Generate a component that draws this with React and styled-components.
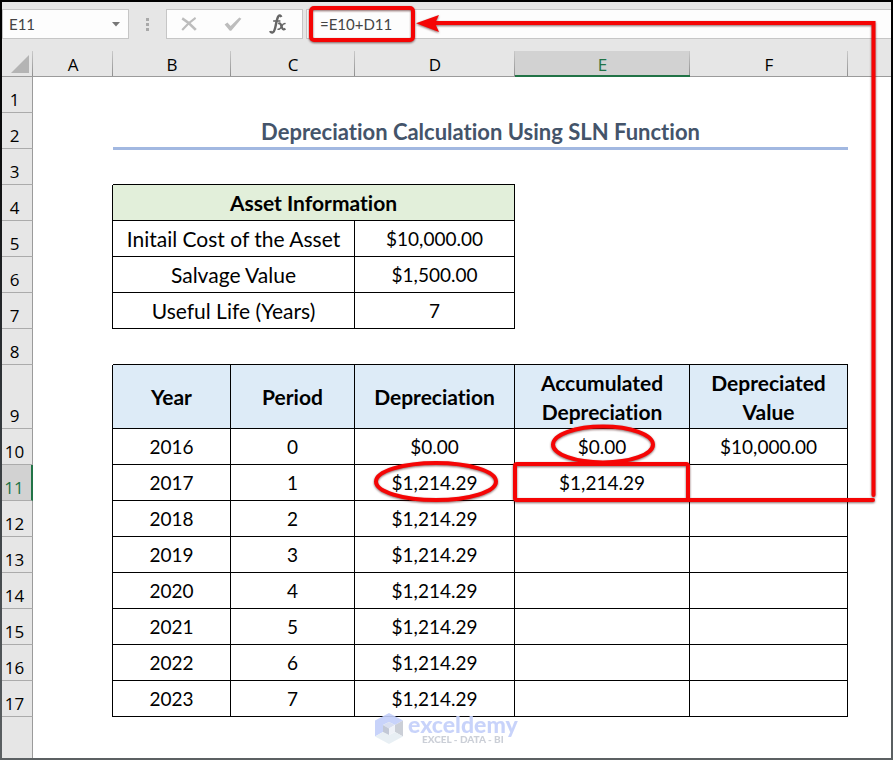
// Import Packages
import styled, { createGlobalStyle, css } from "styled-components";

const GlobalStyle = createGlobalStyle`
    * {
        box-sizing: border-box;
    }

    body {
        margin: 0;
        font-family: Lato, "Liberation Sans", sans-serif;
        font-variant-ligatures: none;
        color: #000;
    }
`;

// Sheet contents
const columns = ["A", "B", "C", "D", "E", "F"];

const assetRows = [
    { row: 5, label: "Initail Cost of the Asset", value: "$10,000.00" },
    { row: 6, label: "Salvage Value", value: "$1,500.00" },
    { row: 7, label: "Useful Life (Years)", value: "7" },
];

const yearRows = [
    { row: 10, cells: ["2016", "0", "$0.00", "$0.00", "$10,000.00"] },
    { row: 11, cells: ["2017", "1", "$1,214.29", "$1,214.29", ""] },
    { row: 12, cells: ["2018", "2", "$1,214.29", "", ""] },
    { row: 13, cells: ["2019", "3", "$1,214.29", "", ""] },
    { row: 14, cells: ["2020", "4", "$1,214.29", "", ""] },
    { row: 15, cells: ["2021", "5", "$1,214.29", "", ""] },
    { row: 16, cells: ["2022", "6", "$1,214.29", "", ""] },
    { row: 17, cells: ["2023", "7", "$1,214.29", "", ""] },
];

// Styled components
const StyledFrame = styled.main`
    position: relative;
    display: flex;
    flex-direction: column;
    min-height: 100vh;
    padding: 2px;
    background: linear-gradient(#000, #0c0d0e 20%, #33383c 55%, #5c6163);
`;

const StyledFormulaBar = styled.header`
    display: flex;
    align-items: center;
    height: 49px;
    padding: 7px 0 12px;
    background: #e6e6e6;
`;

const StyledBox = styled.div`
    display: flex;
    align-items: center;
    height: 30px;
    background: #fdfdfd;
    border: 1px solid #c6c6c6;
`;

const StyledNameBox = styled(StyledBox)`
    width: 127px;
`;

const StyledTools = styled(StyledBox)`
    width: 137px;
    margin-right: 3px;
    padding-right: 2px;
`;

const StyledFormulaBox = styled(StyledBox)`
    flex: 1;
    border-right: 0;
`;

const StyledInput = styled.input`
    flex: 1;
    min-width: 0;
    height: 100%;
    padding: 0 0 0 ${({ $indent }) => $indent}px;
    border: 0;
    outline: 0;
    background: transparent;
    font: 15px Lato, "Liberation Sans", sans-serif;
    color: #444;
`;

const StyledIconButton = styled.button`
    display: flex;
    flex: ${({ $narrow }) => ($narrow ? "0 0 24px" : 1)};
    align-items: center;
    justify-content: center;
    height: 100%;
    padding: 0;
    border: 0;
    background: transparent;
`;

const StyledDots = styled.div`
    display: flex;
    flex-direction: column;
    align-items: center;
    gap: 2px;
    width: 37px;

    i {
        width: 3px;
        height: 3px;
        background: #a9a9a9;
    }
`;

const StyledSheet = styled.div`
    display: flex;
    flex: 1;
    flex-direction: column;
    background: #fff;
`;

const StyledTable = styled.table`
    flex: 1;
    width: 100%;
    table-layout: fixed;
    border-collapse: separate;
    border-spacing: 0;
`;

const StyledCol = styled.col`
    width: ${({ $width }) => $width}px;
`;

const StyledRow = styled.tr`
    height: ${({ $tall }) => ($tall ? 64 : 36)}px;
`;

const headingText = css`
    font-family: "Open Sans", "Noto Sans", sans-serif;
    font-size: 17px;
    font-weight: 400;
    line-height: 20px;
`;

const StyledColumnHead = styled.th`
    ${headingText}
    height: 26px;
    padding: ${({ $active }) => ($active ? 3 : 2)}px 0 0;
    color: ${({ $active }) => ($active ? "#217346" : "#000")};
    background:
        linear-gradient(#c9c9c9, #8f8f8f) right / 1px 100% no-repeat,
        ${({ $active }) => ($active ? "#d2d2d2" : "#e6e6e6")};
    border-bottom: ${({ $active }) =>
        $active ? "2px solid #217346" : "1px solid #9b9b9b"};

    &:last-child {
        background: #e6e6e6;
    }
`;

const StyledCorner = styled(StyledColumnHead)`
    padding: 4px 3px 3px 9px;

    svg {
        display: block;
    }
`;

const StyledRowHead = styled.th`
    ${headingText}
    padding: 0 5px 2px 0;
    vertical-align: bottom;
    color: ${({ $active }) => ($active ? "#217346" : "#000")};
    background: ${({ $active }) => ($active ? "#d2d2d2" : "#e6e6e6")};
    border-right: ${({ $active }) =>
        $active ? "2px solid #217346" : "1px solid #9b9b9b"};
    border-bottom: ${({ $last }) => ($last ? 0 : "1px solid #ababab")};
`;

// A cell draws its own right and bottom line; $edge names the ones it has
const StyledCell = styled.td`
    padding: 0;
    font-size: 19px;
    line-height: 29px;
    text-align: center;
    border: 0 solid #000;
    border-right-width: ${({ $edge = "" }) => ($edge.includes("r") ? 1 : 0)}px;
    border-bottom-width: ${({ $edge = "" }) => ($edge.includes("b") ? 1 : 0)}px;
`;

// Words are set a little larger than the figures
const StyledLabelCell = styled(StyledCell)`
    font-size: 21px;
`;

const StyledHeadCell = styled(StyledLabelCell)`
    font-weight: 700;
    background: ${({ $green }) => ($green ? "#e2efda" : "#ddebf7")};
`;

const StyledTitleCell = styled(StyledCell)`
    padding-top: 3px;
    border-bottom: 2px solid #a2b8e1;
    box-shadow: 0 1px #a2b8e1;

    h1 {
        margin: 0;
        font-size: 22px;
        font-weight: 700;
        line-height: 29px;
        color: #44546a;
    }
`;

// The red marks lie over the sheet
const StyledMarks = styled.svg`
    position: absolute;
    top: 0;
    left: 0;
    pointer-events: none;
    filter: drop-shadow(0 1px 1px rgba(60, 0, 0, 0.6));
`;

const StyledWatermark = styled.div`
    position: absolute;
    top: 713px;
    left: 375px;
    display: flex;
    gap: 5px;
    opacity: 0.9;
`;

const StyledBrand = styled.div`
    display: flex;
    flex-direction: column;
    align-items: center;

    strong {
        font: 900 23px/22px Lato, sans-serif;
        color: #c3cffa;
    }

    small {
        font: 900 10px/8px Lato, sans-serif;
        color: #c6cad3;
    }
`;

function FormulaBar() {
    return (
        <StyledFormulaBar>
            <StyledNameBox>
                <StyledInput $indent={6} aria-label="Name box" defaultValue="E11" />
                <StyledIconButton $narrow aria-label="Open name list">
                    <svg width="8" height="5" viewBox="0 0 8 5">
                        <path d="M0 0h8L4 4.5z" fill="#777" />
                    </svg>
                </StyledIconButton>
            </StyledNameBox>
            <StyledDots>
                <i />
                <i />
                <i />
            </StyledDots>
            <StyledTools>
                <StyledIconButton aria-label="Cancel">
                    <svg width="16" height="14" viewBox="0 0 16 14" fill="none" stroke="#bdbdbd">
                        <path d="M1.2 1.4Q8 5.4 14.8 12.8" strokeWidth="2.6" />
                        <path d="M14.6 0.8Q7 6 1.2 13" strokeWidth="2" />
                    </svg>
                </StyledIconButton>
                <StyledIconButton aria-label="Enter">
                    <svg width="18" height="14" viewBox="0 0 18 14">
                        <path d="M0.6 7.6L3.4 5.6L6.6 9L15.3 0.4L17.4 1.8L7.2 13.8H5.8z" fill="#bdbdbd" />
                    </svg>
                </StyledIconButton>
                <StyledIconButton aria-label="Insert function">
                    <svg width="18" height="20" viewBox="0 0 18 20" fill="none" stroke="#666">
                        <path d="M12.4 3Q11 0.4 9.4 2.3Q8.2 4 6.6 12Q5.4 18.2 3.4 18.5Q1.6 18.8 1.2 17" strokeWidth="2.4" />
                        <path d="M4.2 7H11.4" strokeWidth="1.6" />
                        <path d="M9.3 9.8Q11 8.4 11.8 10.5L13.2 14.2Q14 16.3 16.4 14.6" strokeWidth="2.2" />
                        <path d="M16.6 9.6Q14.5 9 12.6 12.3Q10.6 16.2 8.6 15" strokeWidth="1.5" />
                    </svg>
                </StyledIconButton>
            </StyledTools>
            <StyledFormulaBox>
                <StyledInput $indent={13} aria-label="Formula bar" defaultValue="=E10+D11" />
            </StyledFormulaBox>
        </StyledFormulaBar>
    );
}

function Marks() {
    return (
        <StyledMarks width="893" height="760" fill="none" stroke="#f50505" strokeWidth="4" aria-hidden="true">
            <rect x="311" y="8" width="102" height="32" rx="3" />
            <rect x="515" y="464" width="173" height="36" rx="2" />
            <ellipse cx="603" cy="444.5" rx="50" ry="18" />
            <ellipse cx="436" cy="481.5" rx="60" ry="18.5" />
            <path d="M688 500H873" strokeLinecap="round" />
            <path d="M873.5 495V23H434" strokeLinecap="round" />
            <path d="M416 23.3L439 15L435 23.3L439 32z" fill="#f50505" stroke="none" />
        </StyledMarks>
    );
}

function Watermark() {
    return (
        <StyledWatermark>
            <svg width="28" height="31" viewBox="0 0 28 31">
                <path d="M14 0L28 7.5L20 12L14 9L8 12V19L0 23.5V7.5z" fill="#c3cffa" />
                <path d="M28 7.5V23.5L20 19V12z" fill="#c6cad3" />
                <path d="M0 23.5L8 19L14 22L20 19L28 23.5L14 31z" fill="#e6eef3" />
                <path d="M8 12L14 9L20 12L14 15.5z" fill="#d5dcf0" />
                <path d="M8 12L14 15.5V22L8 19z" fill="#bcc3d2" />
                <path d="M20 12L14 15.5V22L20 19z" fill="#eef1f8" />
            </svg>
            <StyledBrand>
                <strong>exceldemy</strong>
                <small>EXCEL - DATA - BI</small>
            </StyledBrand>
        </StyledWatermark>
    );
}

// The worksheet page
function App() {
    return (
        <StyledFrame>
            <GlobalStyle />
            <FormulaBar />
            <StyledSheet>
                <StyledTable>
                    <colgroup>
                        <StyledCol $width={31} />
                        <StyledCol $width={80} />
                        <StyledCol $width={118} />
                        <StyledCol $width={124} />
                        <StyledCol $width={160} />
                        <StyledCol $width={175} />
                        <StyledCol $width={158} />
                        <col />
                    </colgroup>
                    <thead>
                        <tr>
                            <StyledCorner aria-label="Select all">
                                <svg width="18" height="18" viewBox="0 0 18 18">
                                    <path d="M18 0V18H0z" fill="#b4b4b4" />
                                </svg>
                            </StyledCorner>
                            {columns.map((name) => (
                                <StyledColumnHead key={name} $active={name === "E"}>
                                    {name}
                                </StyledColumnHead>
                            ))}
                            <StyledColumnHead />
                        </tr>
                    </thead>
                    <tbody>
                        <StyledRow>
                            <StyledRowHead>1</StyledRowHead>
                            <StyledCell colSpan={7} />
                        </StyledRow>
                        <StyledRow>
                            <StyledRowHead>2</StyledRowHead>
                            <StyledCell />
                            <StyledTitleCell colSpan={5}>
                                <h1>Depreciation Calculation Using SLN Function</h1>
                            </StyledTitleCell>
                            <StyledCell />
                        </StyledRow>
                        <StyledRow>
                            <StyledRowHead>3</StyledRowHead>
                            <StyledCell />
                            <StyledCell colSpan={3} $edge="b" />
                            <StyledCell colSpan={3} />
                        </StyledRow>
                        <StyledRow>
                            <StyledRowHead>4</StyledRowHead>
                            <StyledCell $edge="r" />
                            <StyledHeadCell as="th" colSpan={3} $edge="rb" $green>
                                Asset Information
                            </StyledHeadCell>
                            <StyledCell colSpan={3} />
                        </StyledRow>
                        {assetRows.map(({ row, label, value }) => (
                            <StyledRow key={row}>
                                <StyledRowHead>{row}</StyledRowHead>
                                <StyledCell $edge="r" />
                                <StyledLabelCell colSpan={2} $edge="rb">{label}</StyledLabelCell>
                                <StyledCell $edge="rb">{value}</StyledCell>
                                <StyledCell colSpan={3} />
                            </StyledRow>
                        ))}
                        <StyledRow>
                            <StyledRowHead>8</StyledRowHead>
                            <StyledCell />
                            <StyledCell colSpan={5} $edge="b" />
                            <StyledCell />
                        </StyledRow>
                        <StyledRow $tall>
                            <StyledRowHead>9</StyledRowHead>
                            <StyledCell $edge="r" />
                            <StyledHeadCell as="th" $edge="rb">Year</StyledHeadCell>
                            <StyledHeadCell as="th" $edge="rb">Period</StyledHeadCell>
                            <StyledHeadCell as="th" $edge="rb">Depreciation</StyledHeadCell>
                            <StyledHeadCell as="th" $edge="rb">Accumulated Depreciation</StyledHeadCell>
                            <StyledHeadCell as="th" $edge="rb">Depreciated<br />Value</StyledHeadCell>
                            <StyledCell />
                        </StyledRow>
                        {yearRows.map(({ row, cells }) => (
                            <StyledRow key={row}>
                                <StyledRowHead $active={row === 11}>{row}</StyledRowHead>
                                <StyledCell $edge="r" />
                                {cells.map((text, i) => (
                                    <StyledCell key={columns[i + 1]} $edge="rb">{text}</StyledCell>
                                ))}
                                <StyledCell />
                            </StyledRow>
                        ))}
                        <tr>
                            <StyledRowHead $last />
                            <StyledCell colSpan={7} />
                        </tr>
                    </tbody>
                </StyledTable>
            </StyledSheet>
            <Watermark />
            <Marks />
        </StyledFrame>
    );
}

export default App;
